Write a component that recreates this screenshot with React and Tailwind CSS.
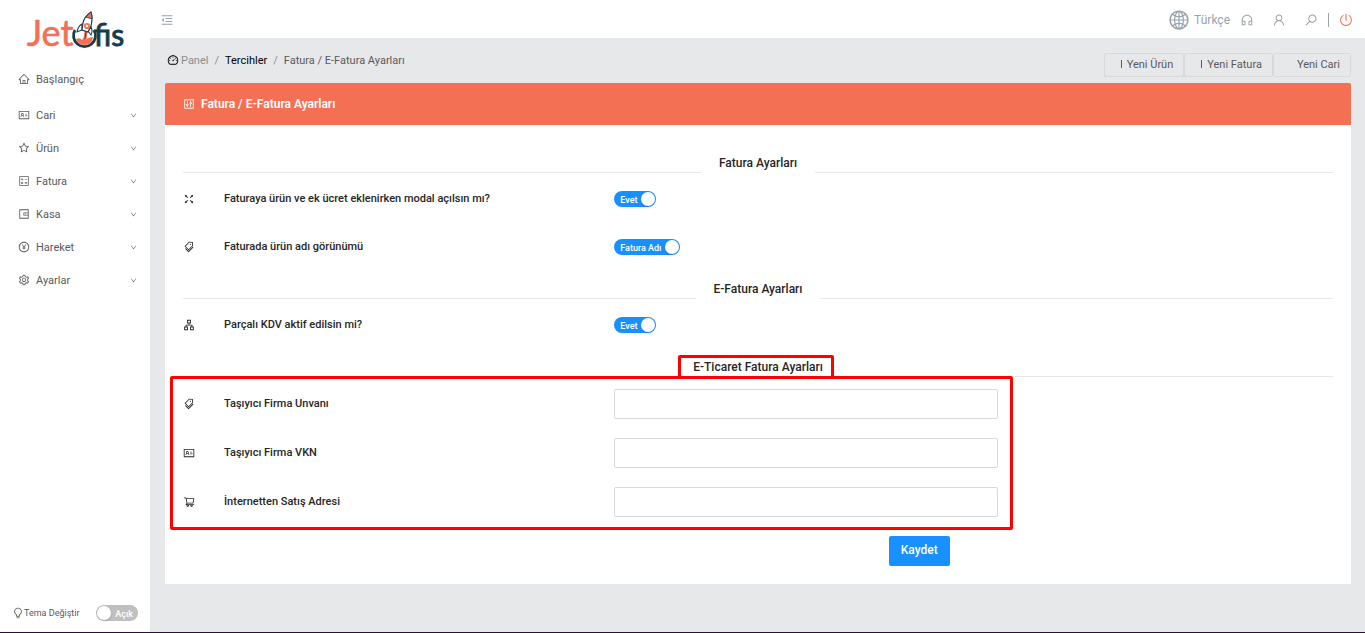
import { useState } from 'react';
import {
  AiOutlineApartment,
  AiOutlineBulb,
  AiOutlineCalculator,
  AiOutlineControl,
  AiOutlineCustomerService,
  AiOutlineDashboard,
  AiOutlineDown,
  AiOutlineFullscreen,
  AiOutlineGlobal,
  AiOutlineHome,
  AiOutlineIdcard,
  AiOutlineMenuFold,
  AiOutlinePayCircle,
  AiOutlinePoweroff,
  AiOutlineSearch,
  AiOutlineSetting,
  AiOutlineShoppingCart,
  AiOutlineStar,
  AiOutlineTags,
  AiOutlineUser,
  AiOutlineWallet,
} from 'react-icons/ai';

const MENU = [
  { label: 'Cari', icon: AiOutlineIdcard },
  { label: 'Ürün', icon: AiOutlineStar },
  { label: 'Fatura', icon: AiOutlineCalculator },
  { label: 'Kasa', icon: AiOutlineWallet },
  { label: 'Hareket', icon: AiOutlinePayCircle },
  { label: 'Ayarlar', icon: AiOutlineSetting },
];

const SHIPPING_FIELDS = [
  { id: 'carrier-title', label: 'Taşıyıcı Firma Unvanı', icon: AiOutlineTags },
  { id: 'carrier-vkn', label: 'Taşıyıcı Firma VKN', icon: AiOutlineIdcard },
  { id: 'web-address', label: 'İnternetten Satış Adresi', icon: AiOutlineShoppingCart },
];

function Logo() {
  return (
    <svg width="104" height="46" viewBox="0 0 104 46" role="img" aria-label="JetOfis">
      <text x="3" y="35" fontFamily="Lato, sans-serif" fontSize="36" fill="#f47055" stroke="#f47055" strokeWidth="0.6">Jet</text>
      <text x="70" y="35" fontFamily="Lato, sans-serif" fontSize="30" fill="#173c4c" stroke="#173c4c" strokeWidth="0.9">fis</text>
      {/* Bowl of the O */}
      <path d="M51 19a11 11 0 1 0 19 0" fill="none" stroke="#173c4c" strokeWidth="2.8" />
      <path d="M52 28q4-2 6 1 2-4 4-1 4-2 7-2-1 8-8 8t-9-6z" fill="#f47055" />
      {/* Smoke trail */}
      <path d="M61 18l-2 12h3l2-11z" fill="#f47055" />
      <path d="M62 20l-1 8" stroke="#173c4c" strokeWidth="0.8" />
      {/* Fins */}
      <path d="M58 13q-4 2-5 8l5-2zM67 16q2 4 0 8l-3-4z" fill="#fff" stroke="#173c4c" strokeWidth="1.1" />
      {/* Rocket */}
      <path d="M67 1q-7 5-8 11l-1 7 6 2 3-6q2-8 0-14z" fill="#fff" stroke="#173c4c" strokeWidth="1.2" />
      <path d="M67 1q-3 2-5 5l6 2q0-4-1-7z" fill="#f47055" stroke="#173c4c" strokeWidth="0.8" />
      <circle cx="63" cy="15" r="2.2" fill="#fff" stroke="#f47055" strokeWidth="1.8" />
    </svg>
  );
}

function Switch({ label, onText, offText, defaultOn = true }) {
  const [on, setOn] = useState(defaultOn);

  return (
    <button
      type="button"
      role="switch"
      aria-checked={on}
      aria-label={label}
      onClick={() => setOn(!on)}
      className={`inline-flex h-4 min-w-[42px] items-center justify-between gap-1 rounded-full px-px text-[9px] leading-4 font-medium text-white ${
        on ? 'bg-[#1890ff]' : 'flex-row-reverse bg-[#bfbfbf]'
      }`}
    >
      <span className={on ? 'pl-[5px] pt-px' : 'pr-1 pt-px'}>{on ? onText : offText}</span>
      <span className="size-[14px] rounded-full bg-white shadow-sm" />
    </button>
  );
}

function SectionTitle({ children, marked }) {
  return (
    <div className="flex h-[22px] items-end">
      <span className="h-px flex-1 bg-[#e8e8e8]" />
      <h2 className="relative h-[22px] px-[18px] text-xs font-medium leading-6 text-[#262626]">
        {children}
        {marked && (
          <span className="absolute left-[3px] right-[7px] top-0 h-6 rounded-xs border-3 border-[#ff0000]" />
        )}
      </h2>
      <span className="h-px flex-1 bg-[#e8e8e8]" />
    </div>
  );
}

function SettingRow({ icon: Icon, label, htmlFor, children }) {
  const Label = htmlFor ? 'label' : 'span';

  return (
    <div className="grid h-[30px] grid-cols-24 items-center text-[11px] leading-4 text-[#262626]">
      <div className="col-span-9 flex items-center gap-[29px]">
        <Icon size={12} className="mb-px" />
        <Label htmlFor={htmlFor} className="font-medium">{label}</Label>
      </div>
      <div className="col-span-8 flex">{children}</div>
    </div>
  );
}

function Sidebar() {
  return (
    <aside className="flex w-[150px] shrink-0 flex-col bg-white text-[11px] leading-4 text-[#595959]">
      <a href="#" className="ml-6 mt-[11px]">
        <Logo />
      </a>
      <nav className="mt-[6px] flex flex-col">
        <a href="#" className="mb-[3px] flex h-[33px] items-center gap-[6px] pl-[18px]">
          <AiOutlineHome size={12} className="mb-px" />
          Başlangıç
        </a>
        {MENU.map(({ label, icon: Icon }) => (
          <button key={label} type="button" className="flex h-[33px] items-center gap-[6px] pl-[18px] pr-[13px]">
            <Icon size={12} className="mb-px" />
            {label}
            <AiOutlineDown size={7} className="ml-auto" />
          </button>
        ))}
      </nav>
      <div className="mt-auto flex items-center justify-between px-3 pb-[11px] text-[9px]">
        <span className="flex items-center">
          <AiOutlineBulb size={12} />
          Tema Değiştir
        </span>
        <Switch label="Tema Değiştir" onText="Koyu" offText="Açık" defaultOn={false} />
      </div>
    </aside>
  );
}

function TopBar() {
  return (
    <header className="flex h-[38px] items-center justify-between bg-white pl-[10px] pr-3 pt-0.5 text-[#99a3ad]">
      <button type="button" aria-label="Menüyü daralt">
        <AiOutlineMenuFold size={14} />
      </button>
      <div className="flex items-center gap-[18px]">
        <button type="button" className="flex items-center gap-1 text-xs">
          <AiOutlineGlobal size={22} />
          Türkçe
        </button>
        <button type="button" aria-label="Destek" className="-ml-2">
          <AiOutlineCustomerService size={14} />
        </button>
        <button type="button" aria-label="Profil">
          <AiOutlineUser size={14} />
        </button>
        <button type="button" aria-label="Ara">
          <AiOutlineSearch size={14} className="rotate-90" />
        </button>
        <div className="-ml-2 flex items-center gap-[10px]">
          <span className="h-[14px] w-px bg-[#99a3ad]" />
          <button type="button" aria-label="Çıkış" className="text-[#f47055]">
            <AiOutlinePoweroff size={14} />
          </button>
        </div>
      </div>
    </header>
  );
}

function PageBar() {
  return (
    <div className="flex h-[45px] items-center justify-between text-[11px] leading-4">
      <nav aria-label="Breadcrumb" className="flex items-center gap-[6px] pl-[2px] text-[#8c8c8c]">
        <a href="#" className="flex items-center gap-0.5">
          <AiOutlineDashboard size={12} className="mb-px text-black" />
          Panel
        </a>
        <span>/</span>
        <a href="#" className="text-black">Tercihler</a>
        <span>/</span>
        <span className="text-[#595959]">Fatura / E-Fatura Ayarları</span>
      </nav>
      <div className="flex pt-2 text-[#595959]">
        <button type="button" className="flex h-6 items-center gap-[5px] rounded-xs border border-[#d9d9d9] pl-4 pr-[10px]">
          <span className="mb-px h-2 w-px bg-[#595959]" />
          Yeni Ürün
        </button>
        <button type="button" className="flex h-6 items-center gap-[5px] rounded-xs border border-[#d9d9d9] pl-4 pr-[10px]">
          <span className="mb-px h-2 w-px bg-[#595959]" />
          Yeni Fatura
        </button>
        <button type="button" className="h-6 rounded-xs border border-[#d9d9d9] pl-[23px] pr-[10px]">
          Yeni Cari
        </button>
      </div>
    </div>
  );
}

function SettingsForm() {
  return (
    <form className="bg-white px-[18px] pb-[18px] pt-[26px]" onSubmit={(e) => e.preventDefault()}>
      <SectionTitle>Fatura Ayarları</SectionTitle>
      <div className="flex flex-col gap-[18px] pb-[15px] pt-[11px]">
        <SettingRow icon={AiOutlineFullscreen} label="Faturaya ürün ve ek ücret eklenirken modal açılsın mı?">
          <Switch label="Faturaya ürün ve ek ücret eklenirken modal açılsın mı?" onText="Evet" offText="Hayır" />
        </SettingRow>
        <SettingRow icon={AiOutlineTags} label="Faturada ürün adı görünümü">
          <Switch label="Faturada ürün adı görünümü" onText="Fatura Adı" offText="Ürün Adı" />
        </SettingRow>
      </div>

      <SectionTitle>E-Fatura Ayarları</SectionTitle>
      <div className="pb-[15px] pt-[11px]">
        <SettingRow icon={AiOutlineApartment} label="Parçalı KDV aktif edilsin mi?">
          <Switch label="Parçalı KDV aktif edilsin mi?" onText="Evet" offText="Hayır" />
        </SettingRow>
      </div>

      <SectionTitle marked>E-Ticaret Fatura Ayarları</SectionTitle>
      <div className="relative flex flex-col gap-[19px] pb-[19px] pt-3">
        {SHIPPING_FIELDS.map(({ id, label, icon }) => (
          <SettingRow key={id} icon={icon} label={label} htmlFor={id}>
            <input
              id={id}
              type="text"
              className="h-[30px] w-full rounded-xs border border-[#d9d9d9] px-3 outline-none focus:border-[#1890ff]"
            />
          </SettingRow>
        ))}
        {/* Highlight frame around the shipping fields */}
        <div className="pointer-events-none absolute -top-px bottom-[6px] left-0 w-17/24">
          <div className="-ml-[13px] -mr-[15px] h-full rounded-xs border-3 border-[#ff0000]" />
        </div>
      </div>

      <div className="flex w-2/3 justify-end">
        <button type="submit" className="h-[30px] rounded-xs bg-[#1890ff] px-3 pb-0.5 text-xs font-medium text-white">
          Kaydet
        </button>
      </div>
    </form>
  );
}

export default function App() {
  return (
    <div className="flex min-h-screen border-b border-[#2b0f3a] bg-[#e7e8ea] font-['Roboto',sans-serif]">
      <Sidebar />
      <div className="min-w-0 flex-1">
        <TopBar />
        <main className="pl-[15px] pr-[14px]">
          <PageBar />
          <section>
            <h1 className="flex h-[42px] items-center gap-[6px] rounded-t-xs bg-[#f47055] px-[18px] text-xs font-semibold text-white">
              <AiOutlineControl size={12} className="mb-px" />
              Fatura / E-Fatura Ayarları
            </h1>
            <SettingsForm />
          </section>
        </main>
      </div>
    </div>
  );
}
